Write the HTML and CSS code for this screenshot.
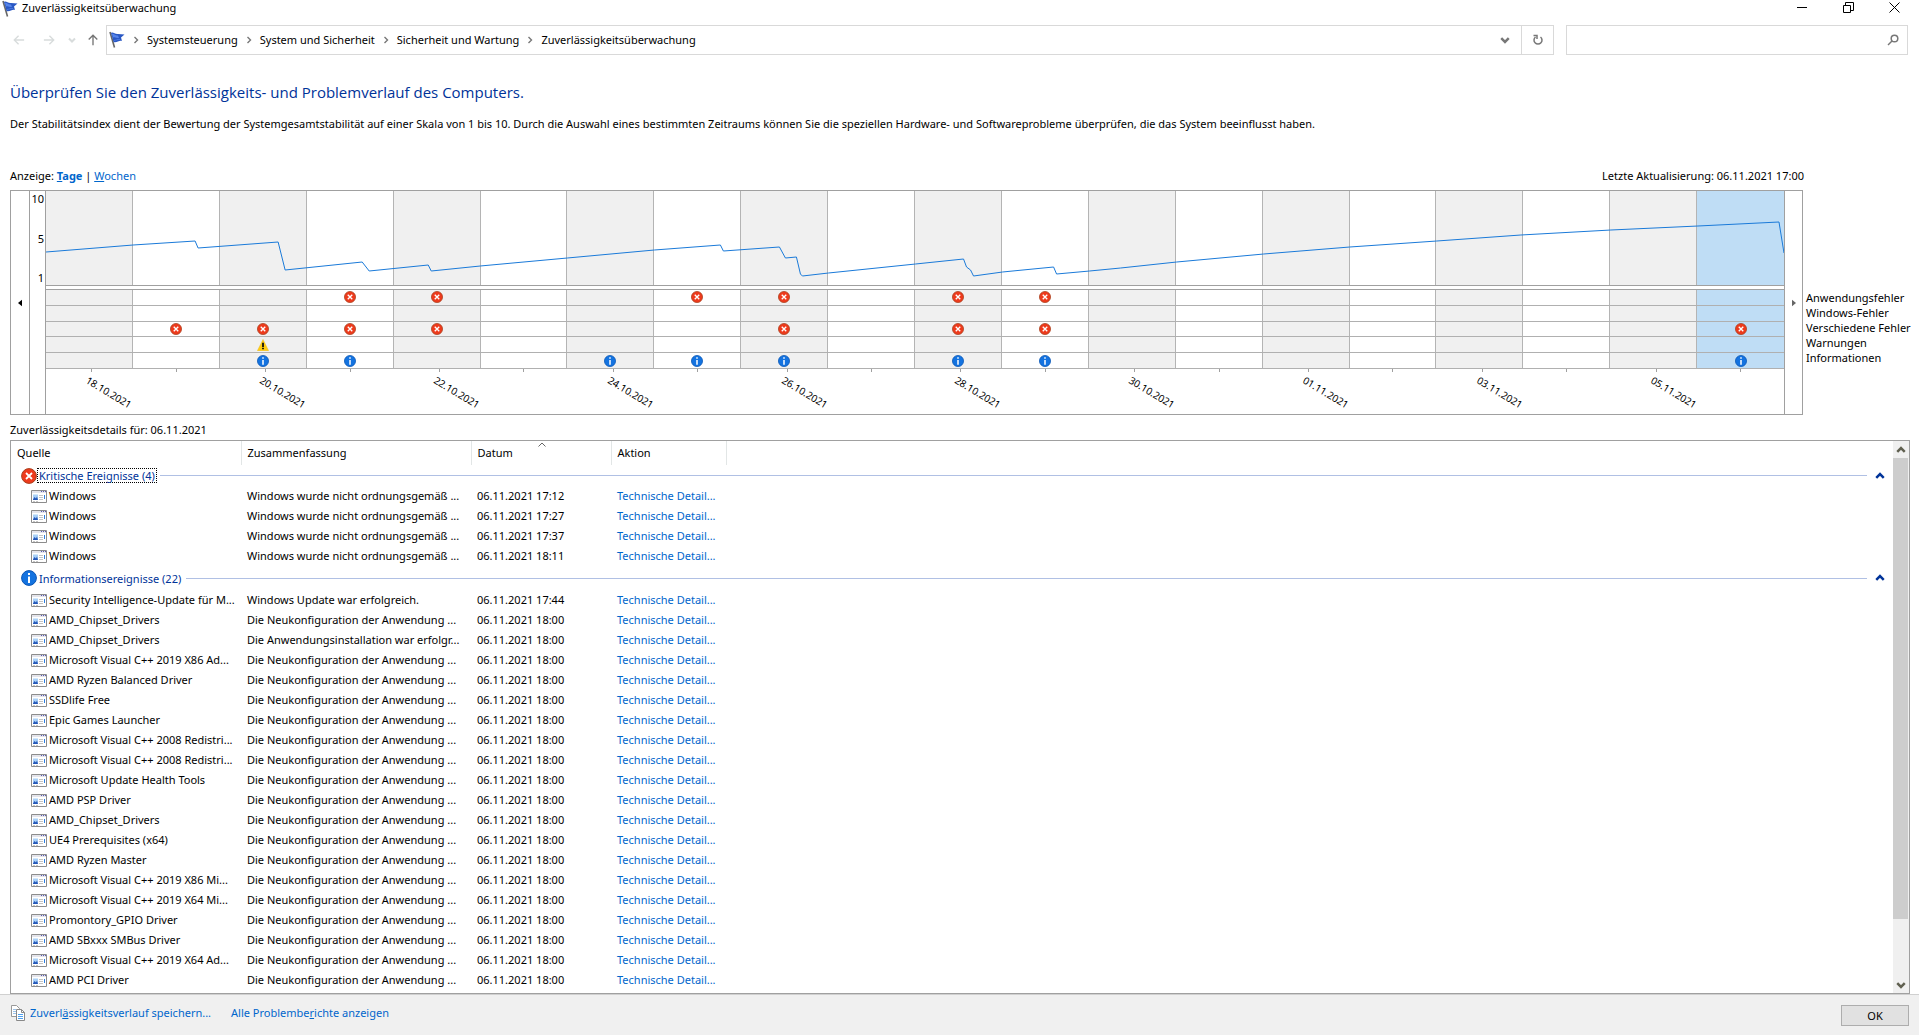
FILE: index.html
```html
<!DOCTYPE html>
<html lang="de">
<head>
<meta charset="UTF-8" />
<meta name="viewport" content="width=device-width, initial-scale=1" />
<title>Zuverlässigkeitsüberwachung</title>
<link rel="stylesheet" href="styles.css">
</head>
<body>

  <!-- Symbole -->
  <svg class="sprite" aria-hidden="true">
    <symbol id="flag" viewBox="0 0 16 18">
      <path d="M1 1 5.500 16.500" stroke="#666" stroke-width="1.600" fill="none"/>
      <path d="M2 2C4 .5 6 3.500 9 3L15.500 3.500 12 6.500 13 10C10 9 8 12 4.500 11Z" fill="#2a58c4"/>
      <path d="M3 3C5 2 6 5 9 4.500L10 7C7 7 6 5.500 4 6.500Z" fill="#5684ea"/>
      <path d="M5 9.500C7 9.500 8 8 11 8.500" stroke="#4a78e0" fill="none"/>
    </symbol>
    <symbol id="error" viewBox="0 0 16 16">
      <circle cx="8" cy="8" r="7.400" fill="#ee3a1c" stroke="#a8411f"/>
      <path d="M5 5 11 11M11 5 5 11" stroke="#fff" stroke-width="1.800"/>
    </symbol>
    <symbol id="info" viewBox="0 0 16 16">
      <circle cx="8" cy="8" r="7.400" fill="#1473e0" stroke="#0a55b4"/>
      <path d="M8 3V5M8 6.500V13" stroke="#fff" stroke-width="2"/>
    </symbol>
    <symbol id="warning" viewBox="0 0 16 16">
      <path d="M8 .5 15.500 15.500H.5Z" fill="#ffcc11" stroke="#eab308" stroke-width=".5"/>
      <path d="M8 5V10.500M8 11.500V13.500" stroke="#111" stroke-width="2.400"/>
    </symbol>
    <symbol id="app" viewBox="0 0 16 13">
      <path d="M.5 .5H15.500V12.500H.5Z" fill="#fff" stroke="#8c8c8c"/>
      <path d="M1 1H15V3H1Z" fill="#e4e4ea"/>
      <path d="M10 1.500H11M12 1.500H13M14 1.500H15" stroke="#5a5ab0"/>
      <path d="M2 4.500H7V10H2Z" fill="#a9d0f7"/>
      <path d="M2 9.500 3.500 7 5 8.500 6 6.500 7 10H2Z" fill="#2457b8"/>
      <path d="M8 5.500H12M8 7.500H12M8 9.500H12M2 11.500H4M5 11.500H7" stroke="#c4c4c4"/>
      <path d="M13.500 5V9" stroke="#2f7fe0"/>
    </symbol>
    <symbol id="chevron" viewBox="0 0 8 8">
      <path d="M1 5.500 4 2.500 7 5.500" fill="none" stroke="currentColor" stroke-width="2"/>
    </symbol>
    <symbol id="crumb" viewBox="0 0 8 8">
      <path d="M2.500 1 5.500 4 2.500 7" fill="none" stroke="#777" stroke-width="1.400"/>
    </symbol>
    <symbol id="arrow" viewBox="0 0 14 14">
      <path d="M13 7H2M6.500 2 1.500 7 6.500 12" fill="none" stroke="currentColor" stroke-width="1.600"/>
    </symbol>
  </svg>

  <!-- Titelleiste -->
  <header class="titlebar">
    <svg class="flag"><use href="#flag"/></svg>
    <span class="window-title">Zuverlässigkeitsüberwachung</span>
    <button class="window-btn" aria-label="Minimieren"><svg viewBox="0 0 11 11"><path d="M0 5.500H10"/></svg></button>
    <button class="window-btn" aria-label="Verkleinern"><svg viewBox="0 0 11 11"><path d="M.5 3.500H7.500V10.500H.5ZM2.500 3.500V.5H10.500V8.500H7.500"/></svg></button>
    <button class="window-btn" aria-label="Schließen"><svg viewBox="0 0 11 11"><path d="M.5 .5 10.500 10.500M10.500 .5 .5 10.500"/></svg></button>
  </header>

  <!-- Adressleiste -->
  <nav class="addressbar">
    <button class="nav-btn disabled" aria-label="Zurück"><svg class="nav-icon"><use href="#arrow"/></svg></button>
    <button class="nav-btn disabled" aria-label="Vorwärts"><svg class="nav-icon forward"><use href="#arrow"/></svg></button>
    <button class="nav-btn recent disabled" aria-label="Verlauf"><svg class="chevron small down"><use href="#chevron"/></svg></button>
    <button class="nav-btn up" aria-label="Nach oben"><svg class="nav-icon upward"><use href="#arrow"/></svg></button>
    <div class="path">
      <svg class="flag"><use href="#flag"/></svg>
      <svg class="crumb"><use href="#crumb"/></svg>
      <a href="#">Systemsteuerung</a>
      <svg class="crumb"><use href="#crumb"/></svg>
      <a href="#">System und Sicherheit</a>
      <svg class="crumb"><use href="#crumb"/></svg>
      <a href="#">Sicherheit und Wartung</a>
      <svg class="crumb"><use href="#crumb"/></svg>
      <a href="#">Zuverlässigkeitsüberwachung</a>
      <button class="path-btn" aria-label="Vorherige Orte"><svg class="chevron down"><use href="#chevron"/></svg></button>
      <button class="path-btn refresh" aria-label="Aktualisieren">
        <svg viewBox="0 0 12 12"><path d="M8.500 3A4 4 0 1 1 3.500 3M1.500 1.500H5V5" /></svg>
      </button>
    </div>
    <label class="search">
      <input type="text" aria-label="Suchen">
      <svg viewBox="0 0 12 12"><circle cx="7.500" cy="4.500" r="3.300"/><path d="M5 7 1 11"/></svg>
    </label>
  </nav>

  <main>
    <h1>Überprüfen Sie den Zuverlässigkeits- und Problemverlauf des Computers.</h1>
    <p class="intro">Der Stabilitätsindex dient der Bewertung der Systemgesamtstabilität auf einer Skala von 1 bis 10. Durch die Auswahl eines bestimmten Zeitraums können Sie die speziellen Hardware- und Softwareprobleme überprüfen, die das System beeinflusst haben.</p>

    <div class="view-row">
      <span>Anzeige: <a href="#" class="active"><u>T</u>age</a> | <a href="#"><u>W</u>ochen</a></span>
      <span>Letzte Aktualisierung: 06.11.2021 17:00</span>
    </div>

    <!-- Diagramm -->
    <section class="chart-row">
      <div class="chart">
        <button class="scroll-btn" aria-label="Zurückblättern"><svg viewBox="0 0 5 8"><path d="M5 0V8L0 4Z"/></svg></button>
        <div class="axis"><span>10</span><span>5</span><span>1</span></div>
        <div class="plot">
          <div class="index">
            <div class="days" id="index-days"></div>
            <svg class="line" viewBox="0 0 1737 94" preserveAspectRatio="none">
              <polyline points="0,61 87,54 149,50 152,57 232,51 239,79 316,71 323,80 382,74 385,80 434,75 521,67 608,59 674,54 677,60 733,56 739,67 750,66 754,83 756,85 782,82 869,73 917,68 920,76 924,79 927,85 956,81 1007,76 1010,83 1043,80 1074,77 1130,71 1217,63 1303,56 1390,50 1474,44 1564,39 1651,35 1732,31 1737,62"/>
            </svg>
          </div>
          <div class="strips" id="strips"></div>
          <div class="days dates" id="dates"></div>
        </div>
        <button class="scroll-btn next" aria-label="Weiterblättern"><svg viewBox="0 0 5 8"><path d="M0 0V8L5 4Z"/></svg></button>
      </div>
      <ul class="legend">
        <li>Anwendungsfehler</li>
        <li>Windows-Fehler</li>
        <li>Verschiedene Fehler</li>
        <li>Warnungen</li>
        <li>Informationen</li>
      </ul>
    </section>

    <!-- Details -->
    <h2>Zuverlässigkeitsdetails für: 06.11.2021</h2>
    <section class="details">
      <div class="table-wrap">
        <table>
          <colgroup><col class="col-source"><col class="col-summary"><col class="col-date"><col class="col-action"><col></colgroup>
          <thead>
            <tr>
              <th>Quelle</th>
              <th>Zusammenfassung</th>
              <th class="sorted">Datum<svg class="sort" viewBox="0 0 8 5"><path d="M.5 4.500 4 1 7.500 4.500"/></svg></th>
              <th>Aktion</th>
              <th></th>
            </tr>
          </thead>
          <tbody id="critical"></tbody>
          <tbody id="information"></tbody>
        </table>
      </div>
      <div class="scrollbar">
        <button aria-label="Nach oben scrollen"><svg class="chevron"><use href="#chevron"/></svg></button>
        <div class="track"><div class="thumb"></div></div>
        <button aria-label="Nach unten scrollen"><svg class="chevron down"><use href="#chevron"/></svg></button>
      </div>
    </section>
  </main>

  <footer>
    <svg class="copy" viewBox="0 0 15 16">
      <path d="M.5 .5H5.500L8.500 3.500V11.500H.5Z" fill="#fff" stroke="#999"/>
      <path d="M2 4.500H5M2 6.500H5M2 8.500H5" stroke="#9cc3ea"/>
      <path d="M5.500 4.500H10.500L13.500 7.500V15.500H5.500Z" fill="#fff" stroke="#888"/>
      <path d="M10.500 4.500V7.500H13.500" fill="none" stroke="#888"/>
      <path d="M7 9.500H12M7 11.500H12M7 13.500H12" stroke="#4fa0ee"/>
    </svg>
    <a href="#">Zuverl<u>ä</u>ssigkeitsverlauf speichern...</a>
    <a href="#">Alle Problembe<u>r</u>ichte anzeigen</a>
    <button class="ok">OK</button>
  </footer>

  <script src="script.js"></script>
</body>
</html>
```
FILE: styles.css
```css
:root {
  --rahmen: #a0a0a0;
  --hell: #d9d9d9;
  --grau: #f0f0f0;
  --link: #0066cc;
  --titel: #003399;
}

* {
  margin: 0;
  padding: 0;
  box-sizing: border-box;
}

body {
  display: flex;
  flex-direction: column;
  min-height: 100vh;
  background: white;
  color: black;
  font-family: 'Noto Sans', 'Open Sans', sans-serif;
  font-size: 11px;
  line-height: 16px;
}

button {
  display: flex;
  align-items: center;
  justify-content: center;
  background: none;
  border: none;
  font: inherit;
  color: inherit;
}

a {
  color: var(--link);
  text-decoration: none;
}

svg {
  flex: none;
}

.sprite {
  position: absolute;
  width: 0;
  height: 0;
}

.flag {
  width: 16px;
  height: 18px;
}

.chevron {
  width: 10px;
  height: 10px;
}

.chevron.small {
  width: 8px;
  height: 8px;
}

.chevron.down {
  transform: rotate(180deg);
}

/* Titelleiste */
.titlebar {
  display: flex;
  align-items: flex-start;
  height: 25px;
  padding: 0 2px;
}

.window-title {
  flex: 1;
  padding-left: 4px;
}

.window-btn {
  width: 46px;
  height: 15px;
}

.window-btn svg {
  width: 11px;
  height: 11px;
  fill: none;
  stroke: black;
}

/* Adressleiste */
.addressbar {
  display: flex;
  align-items: center;
  height: 30px;
  padding: 0 11px 0 4px;
}

.nav-btn {
  width: 30px;
  height: 30px;
  color: #777;
}

.nav-btn.recent {
  width: 16px;
}

.nav-btn.up {
  width: 26px;
}

.nav-btn.disabled {
  color: #d8dcdc;
}

.nav-icon {
  width: 12px;
  height: 12px;
}

.nav-icon.forward {
  transform: rotate(180deg);
}

.nav-icon.upward {
  transform: rotate(90deg);
}

.path {
  flex: 1;
  display: flex;
  align-items: center;
  height: 30px;
  padding-left: 2px;
  border: 1px solid var(--hell);
}

.path a {
  color: black;
}

.crumb {
  width: 8px;
  height: 8px;
  margin: 0 7px;
}

.path-btn {
  width: 32px;
  height: 28px;
  margin-left: auto;
  color: #777;
}

.path-btn.refresh {
  margin-left: 0;
  border-left: 1px solid var(--hell);
}

.path-btn.refresh svg {
  width: 12px;
  height: 12px;
  fill: none;
  stroke: #777;
  stroke-width: 1.5;
}

.search {
  display: flex;
  align-items: center;
  width: 342px;
  height: 30px;
  margin-left: 12px;
  padding-right: 8px;
  border: 1px solid var(--hell);
}

.search input {
  flex: 1;
  height: 26px;
  padding: 0 6px;
  border: none;
  outline: none;
  font: inherit;
}

.search svg {
  width: 12px;
  height: 12px;
  fill: none;
  stroke: #777;
  stroke-width: 1.5;
}

/* Inhalt */
main {
  flex: 1;
  display: flex;
  flex-direction: column;
  padding: 26px 9px 0 10px;
}

h1 {
  color: var(--titel);
  font-family: 'Open Sans', sans-serif;
  font-size: 15px;
  font-weight: 400;
  line-height: 22px;
}

.intro {
  margin-top: 13px;
}

.view-row {
  display: flex;
  justify-content: space-between;
  margin: 36px 106px 6px 0;
}

.view-row .active {
  font-weight: 700;
}

/* Diagramm */
.chart-row {
  display: flex;
}

.chart {
  flex: 1;
  display: flex;
  height: 225px;
  border: 1px solid var(--rahmen);
}

.scroll-btn {
  width: 18px;
}

.scroll-btn svg {
  width: 4px;
  height: 8px;
}

.scroll-btn.next {
  fill: #666;
  border-left: 1px solid var(--rahmen);
}

.axis {
  display: flex;
  flex-direction: column;
  justify-content: space-between;
  width: 16px;
  height: 223px;
  padding-right: 1px;
  padding-bottom: 128px;
  border-left: 1px solid var(--rahmen);
  text-align: right;
}

.plot {
  flex: 1;
  border-left: 1px solid var(--rahmen);
}

.days {
  display: grid;
  grid-template-columns: repeat(20, 1fr);
}

.day {
  display: flex;
  align-items: center;
  justify-content: center;
  border-right: 1px solid #b4b4b4;
}

.day:nth-child(odd) {
  background: var(--grau);
}

.day:last-child {
  background: #bfddf5;
  border-right: none;
}

.day svg {
  width: 12px;
  height: 12px;
}

.index {
  position: relative;
  height: 95px;
  border-bottom: 1px solid var(--rahmen);
}

.index .days {
  height: 94px;
}

.line {
  position: absolute;
  inset: 0;
  width: 100%;
  height: 94px;
}

.line polyline {
  fill: none;
  stroke: #1a7ad9;
  stroke-width: 1;
  vector-effect: non-scaling-stroke;
}

.strips {
  display: grid;
  grid-template-rows: repeat(5, 1fr);
  height: 80px;
  margin-top: 3px;
  border-top: 1px solid var(--rahmen);
}

.strip {
  border-bottom: 1px solid #b0b0b0;
}

.tick {
  display: flex;
  justify-content: center;
  height: 45px;
}

.tick::before {
  content: "";
  width: 1px;
  height: 3px;
  background: var(--rahmen);
}

.tick span {
  width: 0;
  margin: 2px 0 0 -5px;
  white-space: nowrap;
  font-size: 10px;
  transform: rotate(31deg);
  transform-origin: 0 8px;
}

.legend {
  width: 107px;
  padding: 100px 0 0 3px;
  list-style: none;
  line-height: 15px;
  white-space: nowrap;
}

/* Details */
h2 {
  margin: 7px 0 2px;
  font-size: 11px;
  font-weight: 400;
}

.details {
  flex: 1;
  display: flex;
  border: 1px solid var(--rahmen);
}

.table-wrap {
  flex: 1;
}

table {
  width: 100%;
  table-layout: fixed;
  border-collapse: collapse;
}

.col-source,
.col-summary {
  width: 230px;
}

.col-date {
  width: 140px;
}

.col-action {
  width: 115px;
}

th {
  height: 24px;
  padding-left: 6px;
  font-weight: 400;
  text-align: left;
  border-right: 1px solid #e2e6e6;
}

th:last-child {
  border-right: none;
}

.sorted {
  position: relative;
}

.sort {
  position: absolute;
  top: 1px;
  left: 66px;
  width: 8px;
  height: 5px;
  fill: none;
  stroke: #666;
}

td {
  height: 20px;
  padding-left: 6px;
  overflow: hidden;
  white-space: nowrap;
}

.source {
  display: flex;
  align-items: center;
  gap: 2px;
  padding-left: 14px;
}

.source svg {
  width: 16px;
  height: 13px;
}

.group {
  display: flex;
  align-items: center;
  height: 24px;
  padding-left: 4px;
  color: var(--titel);
}

#critical .group {
  height: 21px;
}

.group > svg {
  width: 16px;
  height: 16px;
}

.group .label {
  margin-right: 3px;
  padding: 0 1px;
  line-height: 13px;
  border: 1px solid transparent;
}

#critical .label {
  border: 1px dotted black;
}

.group .rule {
  flex: 1;
  height: 1px;
  background: #b0c0e4;
}

.group button {
  width: 26px;
}

.scrollbar {
  display: flex;
  flex-direction: column;
  width: 16px;
  background: var(--grau);
  color: #606050;
}

.scrollbar button {
  height: 17px;
}

.track {
  flex: 1;
}

.thumb {
  width: 15px;
  height: 89%;
  background: #cdcdcd;
}

/* Fußzeile */
footer {
  display: flex;
  align-items: flex-start;
  height: 41px;
  padding: 10px 10px 0 11px;
  background: var(--grau);
  border-top: 1px solid #d0d0d0;
}

footer a {
  margin-right: 20px;
}

.copy {
  width: 15px;
  height: 16px;
  margin-right: 4px;
}

.ok {
  width: 68px;
  height: 21px;
  margin-left: auto;
  background: #e1e1e1;
  border: 1px solid #adadad;
}
```
FILE: script.js
```js
const DAYS = 20;

// Zeile -> Symbol und Spalten (1 = 18.10.2021)
const strips = [
  { icon: 'error', days: [4, 5, 8, 9, 11, 12] },
  { icon: 'error', days: [] },
  { icon: 'error', days: [2, 3, 4, 5, 9, 11, 12, 20] },
  { icon: 'warning', days: [3] },
  { icon: 'info', days: [3, 4, 7, 8, 9, 11, 12, 20] }
];

const critical = ['17:12', '17:27', '17:37', '18:11'].map(time => ({
  source: 'Windows', summary: 'Windows wurde nicht ordnungsgemäß ...', time
}));

const information = [
  { source: 'Security Intelligence-Update für M...', summary: 'Windows Update war erfolgreich.', time: '17:44' },
  { source: 'AMD_Chipset_Drivers' },
  { source: 'AMD_Chipset_Drivers', summary: 'Die Anwendungsinstallation war erfolgr...' },
  { source: 'Microsoft Visual C++ 2019 X86 Ad...' },
  { source: 'AMD Ryzen Balanced Driver' },
  { source: 'SSDlife Free' },
  { source: 'Epic Games Launcher' },
  { source: 'Microsoft Visual C++ 2008 Redistri...' },
  { source: 'Microsoft Visual C++ 2008 Redistri...' },
  { source: 'Microsoft Update Health Tools' },
  { source: 'AMD PSP Driver' },
  { source: 'AMD_Chipset_Drivers' },
  { source: 'UE4 Prerequisites (x64)' },
  { source: 'AMD Ryzen Master' },
  { source: 'Microsoft Visual C++ 2019 X86 Mi...' },
  { source: 'Microsoft Visual C++ 2019 X64 Mi...' },
  { source: 'Promontory_GPIO Driver' },
  { source: 'AMD SBxxx SMBus Driver' },
  { source: 'Microsoft Visual C++ 2019 X64 Ad...' },
  { source: 'AMD PCI Driver' }
];

function icon(name) {
  return `<svg><use href="#${name}"/></svg>`;
}

function days(render) {
  return Array.from({ length: DAYS }, (_, i) => render(i + 1)).join('');
}

function dateLabel(day) {
  const date = new Date(2021, 9, 17 + day);
  return date.toLocaleDateString('de-DE', { day: '2-digit', month: '2-digit', year: 'numeric' });
}

function rows(events) {
  return events.map(e => `
    <tr>
      <td><div class="source">${icon('app')}<span>${e.source}</span></div></td>
      <td>${e.summary || 'Die Neukonfiguration der Anwendung ...'}</td>
      <td>06.11.2021 ${e.time || '18:00'}</td>
      <td><a href="#">Technische Detail...</a></td>
      <td></td>
    </tr>`).join('');
}

function group(iconName, label, events) {
  return `
    <tr>
      <td colspan="5"><div class="group">
        ${icon(iconName)}<span class="label">${label}</span><span class="rule"></span>
        <button aria-label="${label} einklappen"><svg class="chevron"><use href="#chevron"/></svg></button>
      </div></td>
    </tr>` + rows(events);
}

document.getElementById('index-days').innerHTML = days(() => '<div class="day"></div>');

document.getElementById('strips').innerHTML = strips.map(s =>
  `<div class="days strip">${days(d => `<div class="day">${s.days.includes(d) ? icon(s.icon) : ''}</div>`)}</div>`
).join('');

document.getElementById('dates').innerHTML = days(d =>
  `<div class="tick">${d % 2 ? `<span>${dateLabel(d)}</span>` : ''}</div>`
);

document.getElementById('critical').innerHTML = group('error', 'Kritische Ereignisse (4)', critical);
document.getElementById('information').innerHTML = group('info', 'Informationsereignisse (22)', information);
```
